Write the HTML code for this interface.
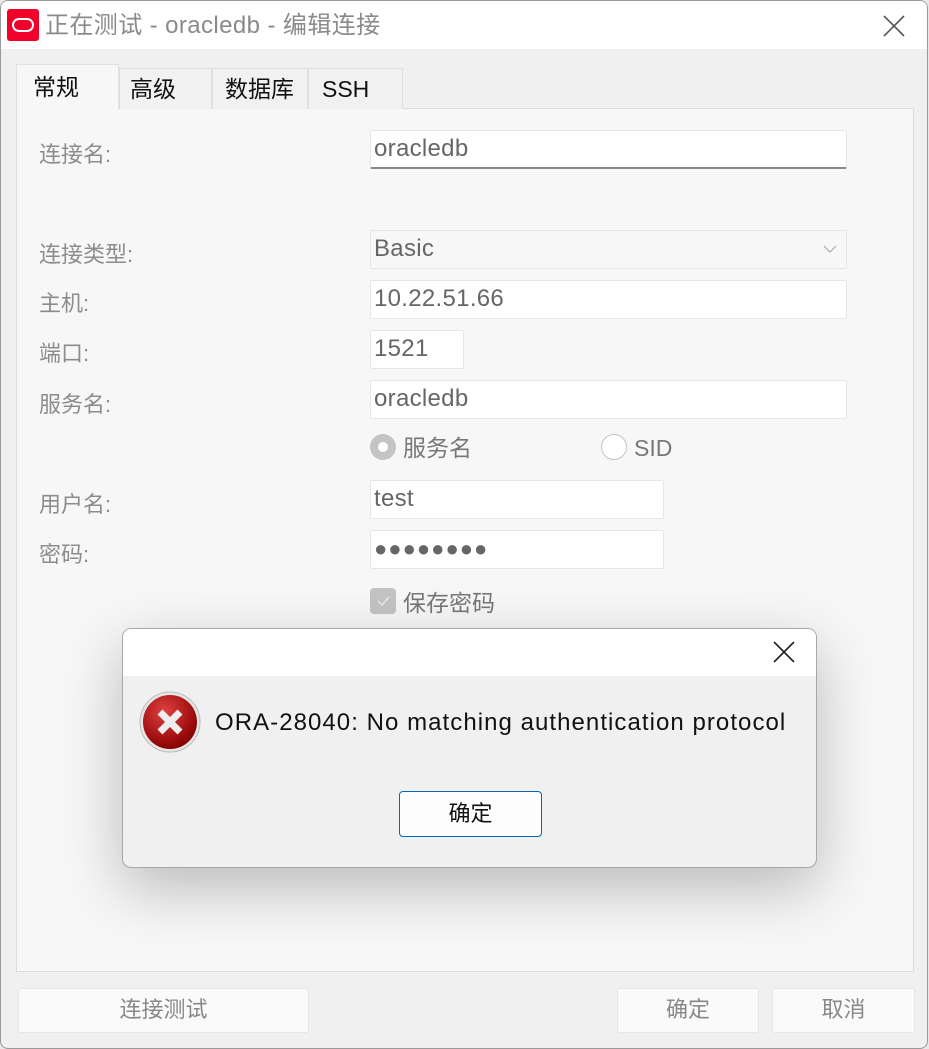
<!DOCTYPE html>
<html><head><meta charset="utf-8"><style>
*{box-sizing:border-box;margin:0;padding:0}
body{width:929px;height:1049px;background:#e8e8e8;font-family:"Liberation Sans","Noto Sans CJK SC",sans-serif;position:relative;overflow:hidden}
.a{position:absolute}
.win{left:0;top:0;width:928px;height:1049px;border:1px solid #9a9a9a;border-radius:8px;background:#f0f0f0;overflow:hidden}
.title{left:0;top:0;width:928px;height:48px;background:#fff}
.lbl{position:absolute;left:38px;font-size:22px;color:#8c8c8c;line-height:30px}
.f{position:absolute;background:#fff;border:1px solid #e6e6e6;border-radius:2px;font-size:24px;color:#666;padding-left:3px;line-height:36px;letter-spacing:0.3px}
.tab{position:absolute;font-size:23px;color:#111;line-height:40px;border:1px solid #e0e0e0;border-bottom:none;background:#f1f1f1}
.btn{position:absolute;background:#fafafa;border:1px solid #e6e6e6;border-radius:3px;font-size:22px;color:#888;text-align:center;line-height:42px}
</style></head><body>
<div class="a win">
 <div class="a title"></div>
 <div class="a" style="left:6px;top:8px;width:32px;height:32px;background:#f0002b;border-radius:3px"><div class="a" style="left:5px;top:9px;width:22px;height:14px;border:2.5px solid #fff;border-radius:7px"></div></div>
 <div class="a" style="left:44px;top:9px;font-size:24px;color:#8a8a8a;line-height:32px;letter-spacing:0.4px">正在测试 - oracledb - 编辑连接</div>
 <svg class="a" style="left:881px;top:13px" width="24" height="24"><path d="M2 2L22 22M22 2L2 22" stroke="#555" stroke-width="1.6"/></svg>
 <div class="a" style="left:15px;top:107px;width:898px;height:864px;background:#f7f7f7;border:1px solid #dcdcdc"></div>
 <div class="tab" style="left:15px;top:63px;width:103px;height:46px;background:#f7f7f7;padding-left:16px;line-height:44px">常规</div>
 <div class="tab" style="left:118px;top:67px;width:93px;height:41px;padding-left:10px">高级</div>
 <div class="tab" style="left:211px;top:67px;width:96px;height:41px;padding-left:12px">数据库</div>
 <div class="tab" style="left:307px;top:67px;width:95px;height:41px;padding-left:13px">SSH</div>
 <div class="lbl" style="top:139px">连接名:</div>
 <div class="lbl" style="top:239px">连接类型:</div>
 <div class="lbl" style="top:288px">主机:</div>
 <div class="lbl" style="top:338px">端口:</div>
 <div class="lbl" style="top:389px">服务名:</div>
 <div class="lbl" style="top:489px">用户名:</div>
 <div class="lbl" style="top:539px">密码:</div>
 <div class="f" style="left:369px;top:129px;width:477px;height:39px;border-bottom:2px solid #888">oracledb</div>
 <div class="f" style="left:369px;top:229px;width:477px;height:39px;background:#f7f7f7">Basic<svg class="a" style="left:452px;top:13px" width="14" height="10"><path d="M1 2L7 8L13 2" stroke="#aaa" fill="none" stroke-width="1.2"/></svg></div>
 <div class="f" style="left:369px;top:279px;width:477px;height:39px">10.22.51.66</div>
 <div class="f" style="left:369px;top:329px;width:94px;height:39px">1521</div>
 <div class="f" style="left:369px;top:379px;width:477px;height:39px">oracledb</div>
 <div class="a" style="left:369px;top:433px;width:26px;height:26px;border-radius:50%;background:#c4c4c4"><div class="a" style="left:8px;top:8px;width:10px;height:10px;border-radius:50%;background:#fff"></div></div>
 <div class="a" style="left:402px;top:432px;font-size:23px;color:#777;line-height:30px">服务名</div>
 <div class="a" style="left:600px;top:433px;width:26px;height:26px;border-radius:50%;border:1.5px solid #c4c4c4;background:#fff"></div>
 <div class="a" style="left:633px;top:432px;font-size:23px;color:#777;line-height:30px">SID</div>
 <div class="f" style="left:369px;top:479px;width:294px;height:39px">test</div>
 <div class="f" style="left:369px;top:529px;width:294px;height:39px;letter-spacing:1px;font-size:22px">●●●●●●●●</div>
 <div class="a" style="left:369px;top:587px;width:26px;height:26px;border-radius:4px;background:#c4c4c4"><svg width="26" height="26"><path d="M8 13L12 17L19 9" stroke="#eee" fill="none" stroke-width="1.3"/></svg></div>
 <div class="a" style="left:402px;top:587px;font-size:23px;color:#777;line-height:30px">保存密码</div>
 <div class="btn" style="left:17px;top:987px;width:291px;height:45px">连接测试</div>
 <div class="btn" style="left:616px;top:987px;width:142px;height:45px">确定</div>
 <div class="btn" style="left:771px;top:987px;width:143px;height:45px">取消</div>
</div>
<div class="a" style="left:122px;top:628px;width:695px;height:240px;border:1px solid #a8a8a8;border-radius:9px;background:#f0f0f0;overflow:hidden;box-shadow:0 20px 60px rgba(0,0,0,.25)">
 <div class="a" style="left:0;top:0;width:695px;height:47px;background:#fff"></div>
 <svg class="a" style="left:650px;top:12px" width="22" height="22"><path d="M1 1L21 21M21 1L1 21" stroke="#222" stroke-width="1.6"/></svg>
 <svg class="a" style="left:15px;top:61px" width="64" height="64"><defs><radialGradient id="g" cx="40%" cy="30%" r="70%"><stop offset="0" stop-color="#e04040"/><stop offset="1" stop-color="#8a0000"/></radialGradient></defs><circle cx="32" cy="32" r="30" fill="#e6e6e6" stroke="#bbb"/><circle cx="32" cy="32" r="27" fill="url(#g)"/><path d="M22 22L42 42M42 22L22 42" stroke="#eee" stroke-width="7"/></svg>
 <div class="a" style="left:92px;top:78px;font-size:24px;color:#111;line-height:32px;letter-spacing:1.05px">ORA-28040: No matching authentication protocol</div>
 <div class="a" style="left:276px;top:162px;width:143px;height:46px;background:#fdfdfd;border:1px solid #0067c0;border-radius:4px;font-size:22px;text-align:center;line-height:44px;color:#111">确定</div>
</div>
</body></html>
